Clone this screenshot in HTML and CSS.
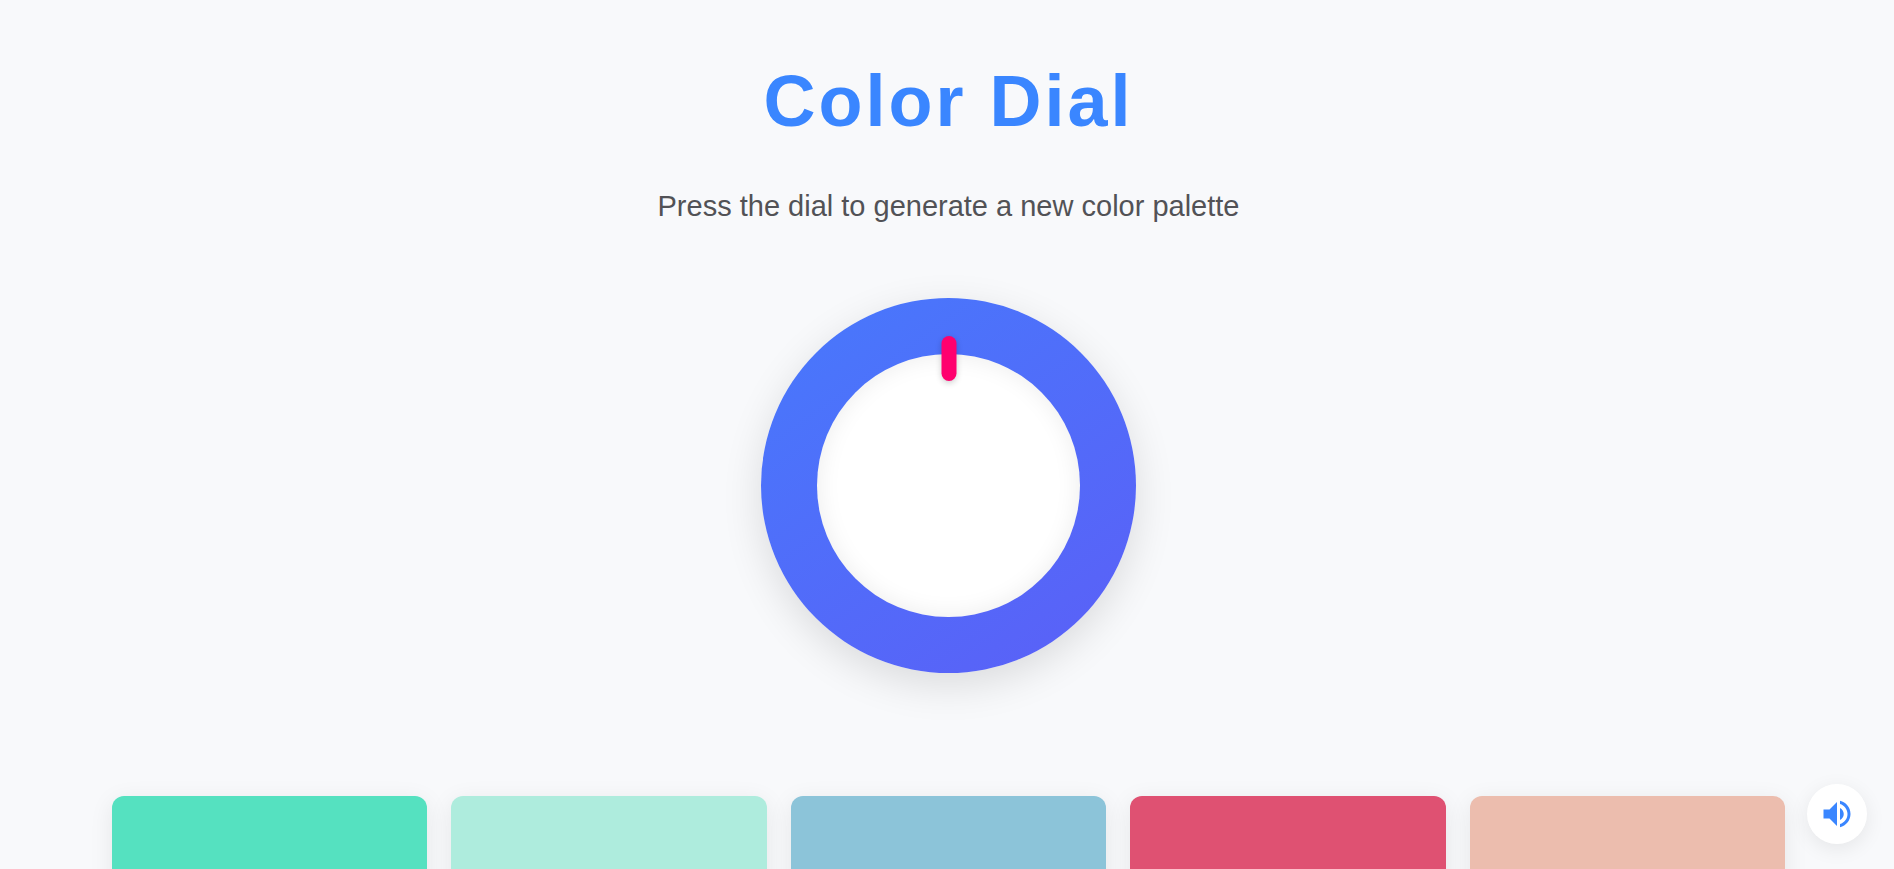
FILE: index.html
```html
<!DOCTYPE html>
<html lang="en">
<head>
  <meta charset="UTF-8">
  <meta name="viewport" content="width=device-width, initial-scale=1.0">
  <title>Color Dial</title>
  <link rel="stylesheet" href="styles.css">
</head>
<body>

  <main class="container">
    <h1>Color Dial</h1>
    <p class="subtitle">Press the dial to generate a new color palette</p>

    <button class="dial" id="dial" type="button" aria-label="Generate palette">
      <span class="dial-inner"></span>
      <span class="dial-pointer"></span>
    </button>

    <div class="palette" id="palette"></div>
  </main>

  <button class="sound-toggle" id="sound" type="button" aria-label="Toggle sound">
    <svg viewBox="0 0 24 24" width="36" height="36" fill="currentColor">
      <path d="M3 9v6h4l5 5V4L7 9H3zm13.5 3c0-1.77-1.02-3.29-2.5-4.03v8.05c1.48-.73 2.5-2.25 2.5-4.02zM14 3.23v2.06c2.89.86 5 3.54 5 6.71s-2.11 5.85-5 6.71v2.06c4.01-.91 7-4.49 7-8.77s-2.99-7.86-7-8.77z"/>
    </svg>
  </button>

  <script src="script.js"></script>
</body>
</html>
```

FILE: styles.css
```css
* {
  box-sizing: border-box;
}

body {
  margin: 0;
  font-family: Arial, 'Liberation Sans', sans-serif;
  background: #f8f9fb;
  color: #525256;
}

.container {
  display: flex;
  flex-direction: column;
  align-items: center;
  padding: 61px 109px 60px 112px;
}

h1 {
  margin: 0;
  font-size: 72px;
  line-height: 80px;
  letter-spacing: 3px;
  color: #3a86ff;
}

.subtitle {
  margin: 47px 0 0;
  font-size: 29px;
  line-height: 36px;
}

.dial {
  position: relative;
  display: flex;
  align-items: center;
  justify-content: center;
  width: 375px;
  height: 375px;
  margin: 74px 0 123px;
  padding: 0;
  border: none;
  border-radius: 50%;
  background: linear-gradient(145deg, #4779fc, #5b5ff7);
  box-shadow: 0 12px 40px rgba(0, 0, 0, 0.12);
  cursor: pointer;
}

.dial-inner {
  width: 70%;
  height: 70%;
  border-radius: 50%;
  background: #fff;
  box-shadow: inset 0 0 25px rgba(0, 0, 0, 0.08);
}

.dial-pointer {
  position: absolute;
  top: 38px;
  left: 50%;
  width: 15px;
  height: 45px;
  border-radius: 8px;
  background: #ff006e;
  box-shadow: 0 2px 6px rgba(0, 0, 0, 0.2);
  transform: translateX(-50%);
}

.palette {
  display: flex;
  gap: 24px;
  width: 100%;
}

.color-card {
  flex: 1;
  height: 200px;
  padding: 0;
  border: none;
  border-radius: 12px;
  box-shadow: 0 5px 25px rgba(0, 0, 0, 0.08);
  cursor: pointer;
}

.sound-toggle {
  position: fixed;
  right: 27px;
  bottom: 25px;
  display: flex;
  align-items: center;
  justify-content: center;
  width: 60px;
  height: 60px;
  padding: 0;
  border: none;
  border-radius: 50%;
  background: #fff;
  color: #3a86ff;
  box-shadow: 0 5px 20px rgba(0, 0, 0, 0.08);
  cursor: pointer;
}

.sound-toggle.muted {
  color: #aaa;
}
```

FILE: script.js
```js
const dial = document.getElementById("dial");
const palette = document.getElementById("palette");
const sound = document.getElementById("sound");

function render(colors) {
  palette.innerHTML = "";
  colors.forEach(color => {
    const card = document.createElement("button");
    card.type = "button";
    card.className = "color-card";
    card.style.backgroundColor = color;
    card.setAttribute("aria-label", color);
    palette.appendChild(card);
  });
}

function randomColor() {
  return "#" + Math.floor(Math.random() * 0x1000000).toString(16).padStart(6, "0");
}

dial.addEventListener("click", () => {
  render(Array.from({ length: 5 }, randomColor));
});

sound.addEventListener("click", () => sound.classList.toggle("muted"));

render(["#55e1c0", "#aeecdd", "#8cc4d9", "#df5172", "#ecbdae"]);
```
